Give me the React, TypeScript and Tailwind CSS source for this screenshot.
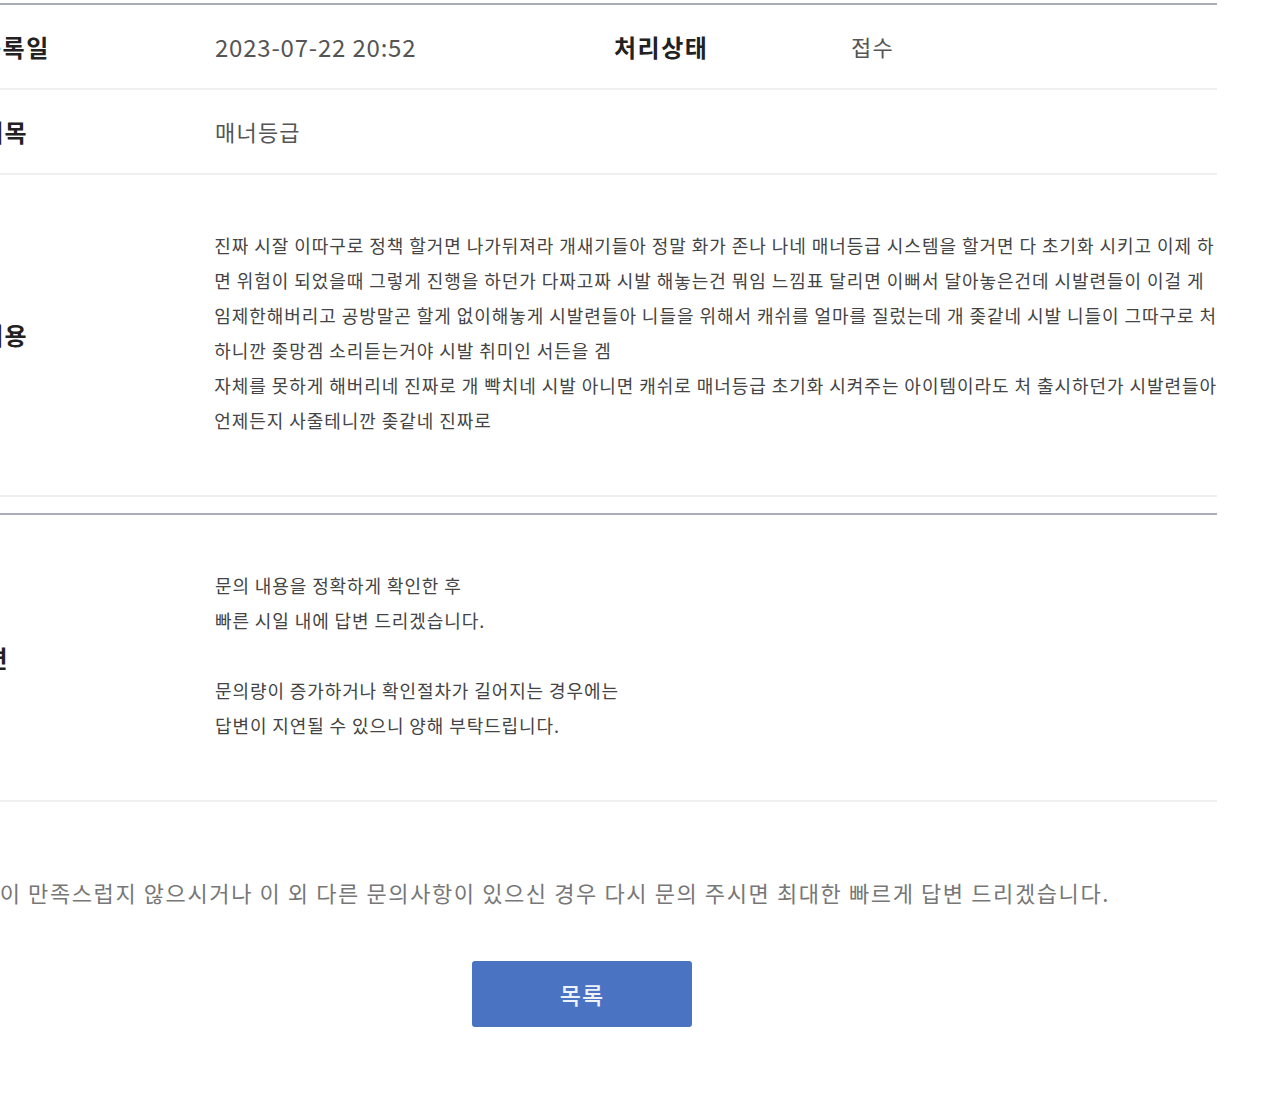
const font = { fontFamily: '"Noto Sans CJK KR", "Noto Sans", sans-serif' };

const contentLines = [
  "진짜 시잘 이따구로 정책 할거면 나가뒤져라 개새기들아 정말 화가 존나 나네 매너등급 시스템을 할거면 다 초기화 시키고 이제 하",
  "면 위험이 되었을때 그렇게 진행을 하던가 다짜고짜 시발 해놓는건 뭐임 느낌표 달리면 이뻐서 달아놓은건데 시발련들이 이걸 게",
  "임제한해버리고 공방말곤 할게 없이해놓게 시발련들아 니들을 위해서 캐쉬를 얼마를 질렀는데 개 좆같네 시발 니들이 그따구로 처",
  "하니깐 좆망겜 소리듣는거야 시발 취미인 서든을 겜",
  "자체를 못하게 해버리네 진짜로 개 빡치네 시발 아니면 캐쉬로 매너등급 초기화 시켜주는 아이템이라도 처 출시하던가 시발련들아",
  "언제든지 사줄테니깐 좆같네 진짜로",
];

const answerLines = [
  "문의 내용을 정확하게 확인한 후",
  "빠른 시일 내에 답변 드리겠습니다.",
  "",
  "문의량이 증가하거나 확인절차가 길어지는 경우에는",
  "답변이 지연될 수 있으니 양해 부탁드립니다.",
];

function Label({ children }: { children: React.ReactNode }) {
  return <div className="text-[24px] font-bold tracking-[1.5px] text-[#222]">{children}</div>;
}

export default function App() {
  return (
    <div className="w-[1284px] h-[1103px] overflow-hidden bg-white" style={font}>
      <div className="ml-[-44px] w-[1261px] pt-[3px]">
        {/* 문의 내용 */}
        <div className="border-t-2 border-[#a9aeb6]">
          <div className="flex h-[85px] items-center border-b-2 border-[#efefef]">
            <div className="w-[259px] pl-[23px]">
              <Label>등록일</Label>
            </div>
            <div className="w-[399px] text-[24px] tracking-[0.8px] text-[#555]">2023-07-22 20:52</div>
            <div className="w-[237px]">
              <Label>처리상태</Label>
            </div>
            <div className="text-[22px] tracking-[1.2px] text-[#555]">접수</div>
          </div>
          <div className="flex h-[85px] items-center border-b-2 border-[#efefef]">
            <div className="w-[259px] pl-[25px]">
              <Label>제목</Label>
            </div>
            <div className="text-[22px] tracking-[1.2px] text-[#555]">매너등급</div>
          </div>
          <div className="flex items-center border-b-2 border-[#efefef]">
            <div className="w-[259px] pl-[25px]">
              <Label>내용</Label>
            </div>
            <div className="pt-[53px] pb-[57px] text-[18px] leading-[35px] tracking-[0.95px] text-[#444]">
              {contentLines.map((l, i) => (
                <div key={i} className="whitespace-nowrap">{l}</div>
              ))}
            </div>
          </div>
        </div>

        {/* 답변 */}
        <div className="mt-[16px] border-t-2 border-[#a9aeb6]">
          <div className="flex items-center border-b-2 border-[#efefef]">
            <div className="w-[259px] pl-[6px]">
              <Label>답변</Label>
            </div>
            <div className="pt-[53px] pb-[57px] text-[18px] leading-[35px] tracking-[0.9px] text-[#444]">
              {answerLines.map((l, i) => (
                <div key={i} className="h-[35px] whitespace-nowrap">{l}</div>
              ))}
            </div>
          </div>
        </div>

        <p className="mt-[74px] whitespace-nowrap text-[22px] leading-[32px] tracking-[1.6px] text-[#777]">
          답변이 만족스럽지 않으시거나 이 외 다른 문의사항이 있으신 경우 다시 문의 주시면 최대한 빠르게 답변 드리겠습니다.
        </p>

        <div className="mt-[53px] flex justify-center pr-[9px]">
          <button className="h-[66px] w-[220px] rounded-[3px] bg-[#4a73c2] text-[23px] font-medium tracking-[1px] text-[#eef2fb]">
            목록
          </button>
        </div>
      </div>
    </div>
  );
}
